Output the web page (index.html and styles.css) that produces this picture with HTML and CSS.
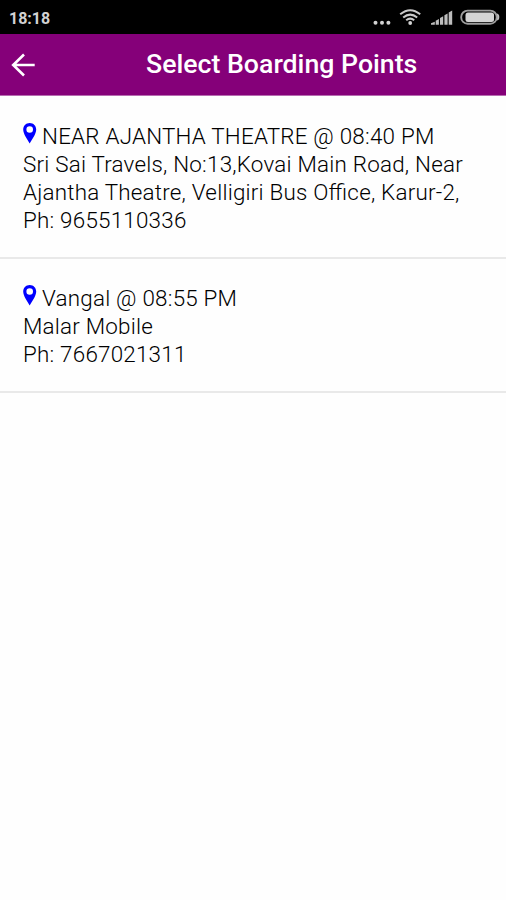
FILE: index.html
```html
<!DOCTYPE html>
<html lang="en">
<head>
<meta charset="utf-8">
<title>Select Boarding Points</title>
<link rel="stylesheet" href="styles.css">
</head>
<body>
<div class="status">
  <span class="clock">18:18</span>
  <svg class="status-icons" width="130" height="24" viewBox="0 0 130 24">
    <g fill="#d2d2d2">
      <circle cx="5.5" cy="17.8" r="2"/><circle cx="12" cy="17.8" r="2"/><circle cx="18.400" cy="17.800" r="2"/>
      <circle cx="40.200" cy="18" r="1.900"/>
    </g>
    <g fill="none" stroke="#cacaca" stroke-width="2">
      <path d="M30.200 9.300Q40.200 1.200 50.200 9.300"/><path d="M33.200 12.500Q40.200 6.700 47.200 12.500"/><path d="M36.200 15.300Q40.200 12 44.200 15.300"/>
    </g>
    <g fill="#bdbdbd">
      <path d="M61 19.700v-1.400l3.800-1.600v3zM65.700 19.700v-4l3.200-1.600v5.600zM70 19.700v-6.700l3.200-1.700v8.400zM74.400 19.700v-9.500l3.200-1.700v11.200zM78.700 19.700V7.600l3.500-2v14.100z"/>
      <path d="M126.500 8.500q2.800 0 2.800 3.500t-2.800 3.500z"/>
    </g>
    <rect x="91.200" y="5.600" width="35.500" height="13.200" rx="6.400" fill="none" stroke="#9c9c9c" stroke-width="1.900"/>
    <rect x="95.500" y="7.500" width="28.500" height="9.400" rx="2.500" fill="#d4d4d4"/>
  </svg>
</div>
<header class="appbar">
  <svg class="back" width="24" height="24" viewBox="0 0 24 24"><path d="M13 1.500L2.200 12 13 22.500M2.500 12h21.200" fill="none" stroke="#fff" stroke-width="2.600"/></svg>
  <h1 class="title">Select Boarding Points</h1>
</header>
<main>
  <section class="point">
    <div class="name"><svg class="pin" width="14" height="21" viewBox="0 0 14 21"><path fill="#00f" fill-rule="evenodd" d="M6.700 0C2.900 0 .2 2.900.2 6.500c0 4.800 4.300 9.800 6.500 14 2.200-4.200 6.500-9.200 6.500-14C13.200 2.900 10.500 0 6.700 0zm0 3.200a3.300 3.300 0 1 1 0 6.600 3.300 3.300 0 0 1 0-6.600z"/></svg><span>NEAR AJANTHA THEATRE @ 08:40 PM</span></div>
    <div>Sri Sai Travels, No:13,Kovai Main Road, Near</div>
    <div>Ajantha Theatre, Velligiri Bus Office, Karur-2,</div>
    <div>Ph: 9655110336</div>
  </section>
  <section class="point">
    <div class="name"><svg class="pin" width="14" height="21" viewBox="0 0 14 21"><path fill="#00f" fill-rule="evenodd" d="M6.700 0C2.900 0 .2 2.900.2 6.500c0 4.800 4.300 9.800 6.500 14 2.200-4.200 6.500-9.200 6.500-14C13.200 2.900 10.500 0 6.700 0zm0 3.200a3.300 3.300 0 1 1 0 6.600 3.300 3.300 0 0 1 0-6.600z"/></svg><span>Vangal @ 08:55 PM</span></div>
    <div>Malar Mobile</div>
    <div>Ph: 7667021311</div>
  </section>
</main>
</body>
</html>
```
FILE: styles.css
```css
* { box-sizing: border-box; }
body { margin: 0; background: #fefefe; color: #000; font-family: Roboto, "Liberation Sans", sans-serif; }
.status { height: 34px; background: #000; display: flex; justify-content: space-between; padding: 5px 6px 0 9px; }
.clock { color: #d2d2d2; font-size: 16px; font-weight: 700; line-height: 27px; }
.status-icons { display: block; }
.appbar { height: 62px; background: #850079; border-bottom: 1px solid #b66bb0; display: flex; align-items: center; padding-left: 11px; }
.back { flex: none; margin-top: 1px; }
.title { margin: 0 0 0 111px; color: #fff; font-size: 26.700px; font-weight: 500; line-height: 31px; white-space: nowrap; }
.point { padding: 26px 23px 23px; border-bottom: 2px solid #e9e9e9; font-size: 22.400px; font-weight: 300; line-height: 28px; letter-spacing: .22px; font-feature-settings: "liga"; white-space: nowrap; }
.point + .point { padding: 25px 23px 23px; }
.name { display: flex; }
.pin { flex: none; margin: 1px 5px 0 0; }
```
